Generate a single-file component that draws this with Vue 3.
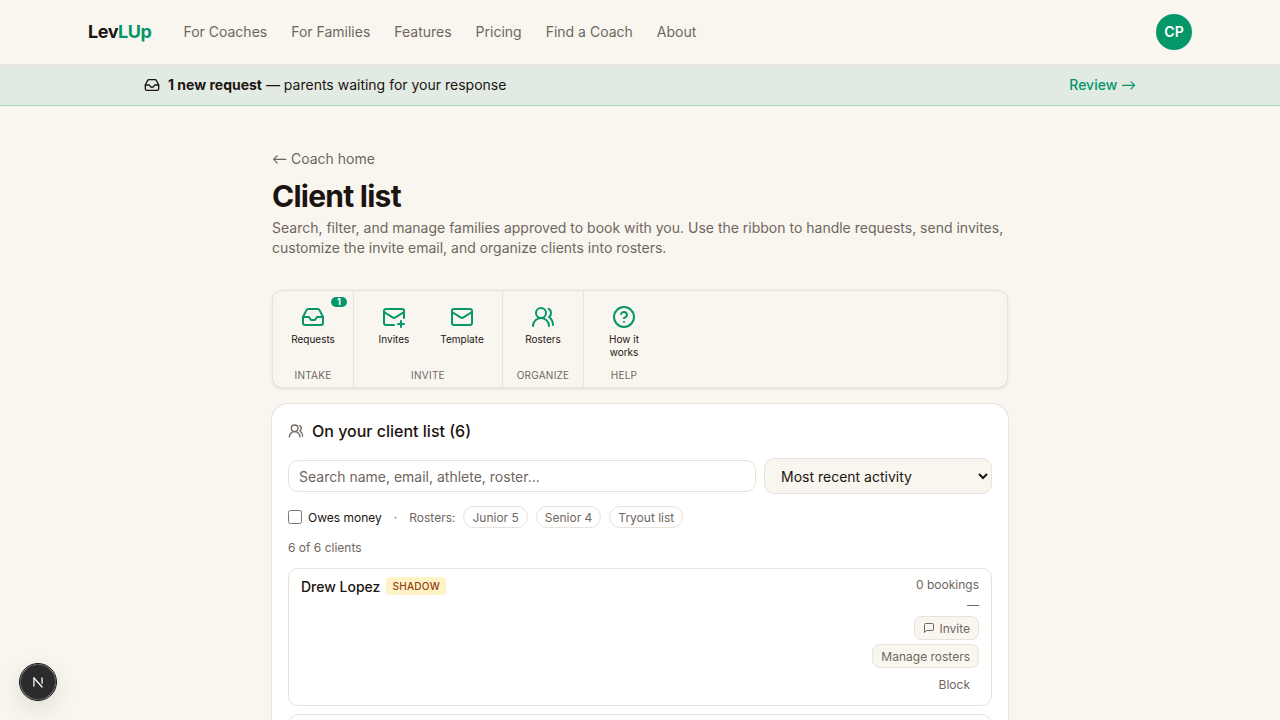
<script setup>
const navLinks = ["For Coaches", "For Families", "Features", "Pricing", "Find a Coach", "About"];
const rosters = ["Junior 5", "Senior 4", "Tryout list"];
</script>

<template>
  <div class="page">
    <header class="site-header">
      <a class="logo">Lev<span>LUp</span></a>
      <nav class="nav">
        <a v-for="link in navLinks" :key="link">{{ link }}</a>
      </nav>
      <div class="avatar">CP</div>
    </header>

    <div class="banner">
      <div class="banner-text">
        <svg class="banner-icon" viewBox="0 0 24 24" fill="none" stroke="currentColor" stroke-width="2" stroke-linecap="round" stroke-linejoin="round">
          <polyline points="22 12 16 12 14 15 10 15 8 12 2 12" />
          <path d="M5.45 5.11 2 12v6a2 2 0 0 0 2 2h16a2 2 0 0 0 2-2v-6l-3.45-6.89A2 2 0 0 0 16.76 4H7.24a2 2 0 0 0-1.79 1.11z" />
        </svg>
        <span><strong>1 new request</strong> — parents waiting for your response</span>
      </div>
      <a class="banner-link">Review <span class="arrow">→</span></a>
    </div>

    <main class="main">
      <a class="back"><span class="arrow">←</span> Coach home</a>
      <h1>Client list</h1>
      <p class="intro">
        Search, filter, and manage families approved to book with you. Use the ribbon to handle requests, send invites,
        customize the invite email, and organize clients into rosters.
      </p>

      <div class="ribbon">
        <section class="group">
          <div class="tools">
            <button class="tool">
              <span class="badge">1</span>
              <svg viewBox="0 0 24 24" fill="none" stroke="currentColor" stroke-width="2" stroke-linecap="round" stroke-linejoin="round">
                <polyline points="22 12 16 12 14 15 10 15 8 12 2 12" />
                <path d="M5.45 5.11 2 12v6a2 2 0 0 0 2 2h16a2 2 0 0 0 2-2v-6l-3.45-6.89A2 2 0 0 0 16.76 4H7.24a2 2 0 0 0-1.79 1.11z" />
              </svg>
              <span class="tool-label">Requests</span>
            </button>
          </div>
          <div class="group-label">Intake</div>
        </section>
        <section class="group">
          <div class="tools">
            <button class="tool">
              <svg viewBox="0 0 24 24" fill="none" stroke="currentColor" stroke-width="2" stroke-linecap="round" stroke-linejoin="round">
                <path d="M22 13V6a2 2 0 0 0-2-2H4a2 2 0 0 0-2 2v12c0 1.1.9 2 2 2h8" />
                <path d="m22 7-8.97 5.7a1.94 1.94 0 0 1-2.06 0L2 7" />
                <path d="M19 16v6" />
                <path d="M16 19h6" />
              </svg>
              <span class="tool-label">Invites</span>
            </button>
            <button class="tool">
              <svg viewBox="0 0 24 24" fill="none" stroke="currentColor" stroke-width="2" stroke-linecap="round" stroke-linejoin="round">
                <rect x="2" y="4" width="20" height="16" rx="2" />
                <path d="m22 7-8.97 5.7a1.94 1.94 0 0 1-2.06 0L2 7" />
              </svg>
              <span class="tool-label">Template</span>
            </button>
          </div>
          <div class="group-label">Invite</div>
        </section>
        <section class="group">
          <div class="tools">
            <button class="tool">
              <svg viewBox="0 0 24 24" fill="none" stroke="currentColor" stroke-width="2" stroke-linecap="round" stroke-linejoin="round">
                <path d="M18 21a8 8 0 0 0-16 0" />
                <circle cx="10" cy="8" r="5" />
                <path d="M22 20c0-3.37-2-6.5-4-8a5 5 0 0 0-.45-8.3" />
              </svg>
              <span class="tool-label">Rosters</span>
            </button>
          </div>
          <div class="group-label">Organize</div>
        </section>
        <section class="group">
          <div class="tools">
            <button class="tool">
              <svg viewBox="0 0 24 24" fill="none" stroke="currentColor" stroke-width="2" stroke-linecap="round" stroke-linejoin="round">
                <circle cx="12" cy="12" r="10" />
                <path d="M9.09 9a3 3 0 0 1 5.83 1c0 2-3 3-3 3" />
                <path d="M12 17h.01" />
              </svg>
              <span class="tool-label">How it works</span>
            </button>
          </div>
          <div class="group-label">Help</div>
        </section>
      </div>

      <section class="panel">
        <h2>
          <svg viewBox="0 0 24 24" fill="none" stroke="currentColor" stroke-width="2" stroke-linecap="round" stroke-linejoin="round">
            <path d="M18 21a8 8 0 0 0-16 0" />
            <circle cx="10" cy="8" r="5" />
            <path d="M22 20c0-3.37-2-6.5-4-8a5 5 0 0 0-.45-8.3" />
          </svg>
          On your client list (6)
        </h2>

        <div class="search-row">
          <input class="search" type="text" placeholder="Search name, email, athlete, roster..." />
          <select class="sort">
            <option>Most recent activity</option>
          </select>
        </div>

        <div class="filters">
          <label class="owes"><input type="checkbox" /> Owes money</label>
          <span class="dot">·</span>
          <span class="rosters-label">Rosters:</span>
          <button v-for="r in rosters" :key="r" class="chip">{{ r }}</button>
        </div>

        <div class="count">6 of 6 clients</div>

        <ul class="clients">
          <li class="client">
            <div class="client-name">
              <span>Drew Lopez</span>
              <span class="shadow-tag">SHADOW</span>
            </div>
            <div class="client-side">
              <div class="bookings">0 bookings</div>
              <div class="dash">—</div>
              <button class="action">
                <svg viewBox="0 0 24 24" fill="none" stroke="currentColor" stroke-width="2" stroke-linecap="round" stroke-linejoin="round">
                  <path d="M21 15a2 2 0 0 1-2 2H7l-4 4V5a2 2 0 0 1 2-2h14a2 2 0 0 1 2 2z" />
                </svg>
                Invite
              </button>
              <button class="action">Manage rosters</button>
              <button class="action plain">Block</button>
            </div>
          </li>
          <li class="client next"></li>
        </ul>
      </section>
    </main>

    <button class="dev-badge" aria-label="Next.js dev tools">
      <svg viewBox="0 0 20 20" fill="none" stroke="#f4f4f4" stroke-width="1.5" stroke-linecap="round">
        <path d="M5.5 14.5V5.5" />
        <path d="M5.5 5.5 14.5 15.5" />
        <path d="M14.5 5.5v6" />
      </svg>
    </button>
  </div>
</template>

<style scoped>
.page {
  min-height: 720px;
  background: #f9f6f0;
  color: #1c1410;
  font-family: Inter, "Liberation Sans", sans-serif;
}

.arrow {
  font-family: Lato, sans-serif;
  font-size: 15px;
  font-weight: 400;
  line-height: 1;
}

.site-header {
  display: flex;
  align-items: center;
  height: 64px;
  padding: 0 88px;
  border-bottom: 1px solid #e8e2d9;
}

.logo {
  font-size: 18px;
  line-height: 28px;
  font-weight: 700;
  letter-spacing: -0.45px;
}

.logo span {
  color: #059669;
}

.nav {
  display: flex;
  gap: 24px;
  margin-left: 32px;
  font-size: 14px;
  line-height: 20px;
  color: #6f6660;
}

.avatar {
  display: flex;
  align-items: center;
  justify-content: center;
  width: 36px;
  height: 36px;
  margin-left: auto;
  border-radius: 50%;
  background: #059669;
  color: #fff;
  font-size: 14px;
  line-height: 20px;
  font-weight: 600;
}

.banner {
  display: flex;
  align-items: center;
  justify-content: space-between;
  height: 40px;
  padding: 0 144px;
  background: #e1ebe3;
  border-bottom: 1px solid #a3d6bd;
  font-size: 14px;
  line-height: 20px;
}

.banner-text {
  display: flex;
  align-items: center;
  gap: 8px;
}

.banner-icon {
  width: 16px;
  height: 16px;
}

.banner-text strong {
  font-weight: 700;
}

.banner-link {
  color: #059669;
  font-weight: 500;
}

.main {
  width: 736px;
  margin: 0 auto;
  padding-top: 43px;
}

.back {
  display: block;
  height: 20px;
  font-size: 14px;
  line-height: 20px;
  color: #6f6660;
}

h1 {
  margin: 9px 0 0;
  font-size: 30px;
  line-height: 36px;
  font-weight: 700;
  letter-spacing: -0.75px;
}

.intro {
  margin: 4px 0 0;
  font-size: 14px;
  line-height: 20px;
  color: #6f6660;
}

.ribbon {
  display: flex;
  margin-top: 32px;
  background: #f9f6f0;
  border: 1px solid #e8e2d9;
  border-radius: 10px;
  box-shadow: 0 1px 3px rgba(0, 0, 0, 0.1);
}

.group {
  display: flex;
  flex-direction: column;
  border-right: 1px solid #e8e2d9;
}

.group:last-child {
  border-right: 0;
}

.tools {
  display: flex;
  flex: 1;
  gap: 4px;
  padding: 8px 8px 0;
}

.tool {
  position: relative;
  display: flex;
  flex-direction: column;
  align-items: center;
  width: 64px;
  padding: 6px 4px 0;
  border: 0;
  background: none;
  color: #059669;
  font-family: inherit;
}

.tool svg {
  width: 24px;
  height: 24px;
}

.tool-label {
  margin-top: 4px;
  font-size: 10px;
  line-height: 13px;
  color: #1c1410;
}

.badge {
  position: absolute;
  top: -2px;
  right: -2px;
  min-width: 16px;
  height: 10px;
  border-radius: 5px;
  background: #059669;
  color: #fff;
  font-size: 9px;
  font-weight: 700;
  line-height: 10px;
}

.group-label {
  padding: 9px 0 4px;
  font-size: 10px;
  line-height: 15px;
  text-align: center;
  letter-spacing: 0.25px;
  text-transform: uppercase;
  color: #6f6660;
}

.panel {
  margin-top: 16px;
  padding: 16px;
  background: #fff;
  border-radius: 16px;
  box-shadow: 0 0 0 1px #e8e2d9;
}

h2 {
  display: flex;
  align-items: center;
  gap: 8px;
  margin: 0;
  font-size: 16px;
  line-height: 22px;
  font-weight: 500;
}

h2 svg {
  width: 16px;
  height: 16px;
  color: #6f6660;
}

.search-row {
  display: flex;
  align-items: center;
  gap: 8px;
  margin-top: 16px;
}

.search {
  flex: 1;
  min-width: 0;
  height: 32px;
  box-sizing: border-box;
  padding: 0 10px;
  background: #fff;
  border: 1px solid #e8e2d9;
  border-radius: 10px;
  color: #1c1410;
  font-family: inherit;
  font-size: 14px;
}

.search::placeholder {
  color: #6f6660;
}

.sort {
  width: 228px;
  height: 36px;
  padding: 0 12px;
  background: #f9f6f0;
  border: 1px solid #e8e2d9;
  border-radius: 10px;
  color: #1c1410;
  font-family: inherit;
  font-size: 14px;
}

.filters {
  display: flex;
  align-items: center;
  margin-top: 12px;
  font-size: 12px;
}

.owes {
  display: flex;
  align-items: center;
  gap: 6px;
}

.owes input {
  width: 14px;
  height: 14px;
  margin: 0;
}

.dot {
  margin: 0 12px;
  color: #6f6660;
}

.rosters-label {
  margin-right: 8px;
  color: #6f6660;
}

.chip {
  height: 22px;
  margin-right: 8px;
  padding: 0 8px;
  background: #fff;
  border: 1px solid #e8e2d9;
  border-radius: 11px;
  color: #6f6660;
  font-family: inherit;
  font-size: 12px;
}

.count {
  margin-top: 12px;
  font-size: 12px;
  line-height: 16px;
  color: #6f6660;
}

.clients {
  display: flex;
  flex-direction: column;
  gap: 8px;
  margin: 12px 0 0;
  padding: 0;
  list-style: none;
}

.client {
  display: flex;
  justify-content: space-between;
  padding: 8px 12px 9px;
  border: 1px solid #e8e2d9;
  border-radius: 10px;
}

.client.next {
  height: 120px;
}

.client-name {
  display: flex;
  align-items: center;
  gap: 6px;
  height: 18px;
  font-size: 14px;
  font-weight: 500;
}

.shadow-tag {
  padding: 0 6px;
  height: 18px;
  background: #fef3c7;
  border-radius: 4px;
  color: #92400e;
  font-size: 10px;
  line-height: 18px;
  letter-spacing: 0.3px;
}

.client-side {
  display: flex;
  flex-direction: column;
  align-items: flex-end;
  font-size: 12px;
  color: #6f6660;
}

.bookings,
.dash {
  line-height: 16px;
}

.dash {
  height: 15px;
  margin-top: 4px;
}

.action {
  display: flex;
  align-items: center;
  gap: 4px;
  height: 24px;
  margin-top: 4px;
  padding: 0 8px;
  background: #f9f6f0;
  border: 1px solid #e8e2d9;
  border-radius: 8px;
  color: #6f6660;
  font-family: inherit;
  font-size: 12px;
}

.action svg {
  width: 12px;
  height: 12px;
}

.action.plain {
  background: none;
  border-color: transparent;
}

.dev-badge {
  position: fixed;
  left: 20px;
  bottom: 20px;
  display: flex;
  align-items: center;
  justify-content: center;
  width: 36px;
  height: 36px;
  padding: 0;
  background: #2b2b2b;
  border: 1px solid #555;
  outline: 1px solid #111;
  border-radius: 50%;
  box-shadow: 0 8px 24px rgba(0, 0, 0, 0.12);
}

.dev-badge svg {
  width: 18px;
  height: 18px;
}
</style>

<style>
html,
body {
  background: #f9f6f0;
}
</style>
